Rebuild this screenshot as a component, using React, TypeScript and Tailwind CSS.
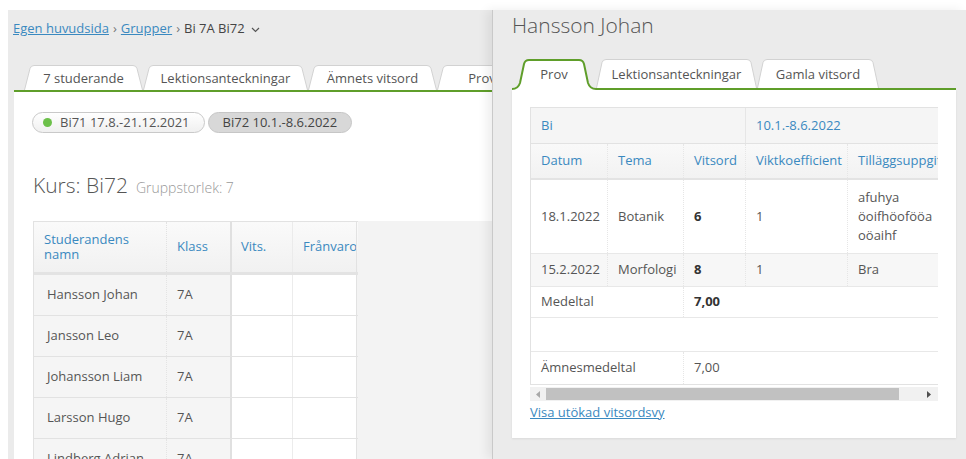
import React from "react";

type TabDef = { label: string; w: number };

const groupTabs: TabDef[] = [
  { label: "7 studerande", w: 119 },
  { label: "Lektionsanteckningar", w: 165 },
  { label: "Ämnets vitsord", w: 129 },
  { label: "Prov", w: 90 },
];

const drawerTabs: TabDef[] = [
  { label: "Prov", w: 84 },
  { label: "Lektionsanteckningar", w: 161 },
  { label: "Gamla vitsord", w: 122 },
];

const students = [
  "Hansson Johan",
  "Jansson Leo",
  "Johansson Liam",
  "Larsson Hugo",
  "Lindberg Adrian",
];

// trapezoid outline of a tab, open at the bottom
function tabOutline(w: number, h: number, s: number) {
  return `M0.5,${h} L${s - 2},3.5 Q${s - 1},0.5 ${s + 2},0.5 L${w - s - 2},0.5 Q${w - s + 1},0.5 ${w - s + 2},3.5 L${w - 0.5},${h}`;
}

function Tab({ label, w, h }: { label: string; w: number; h: number }) {
  return (
    <div className="relative shrink-0">
      <svg width={w} height={h} className="block">
        <path d={tabOutline(w, h, 8)} fill="#fff" stroke="#d2d2d2" strokeWidth="1" />
      </svg>
      <span className="absolute inset-0 flex items-center justify-center whitespace-nowrap pt-[3px] text-[#555]">
        {label}
      </span>
    </div>
  );
}

function ActiveTab({ label, w }: { label: string; w: number }) {
  const line = `M0,30 Q6,30 8,24 L12,5 Q13,1 17,1 L${w - 17},1 Q${w - 13},1 ${w - 12},5 L${w - 8},24 Q${w - 6},30 ${w},30`;
  return (
    <div className="relative -mb-[2px] shrink-0">
      <svg width={w} height={31} className="block">
        <path d={`${line} L${w},31 L0,31 Z`} fill="#fff" />
        <path d={line} fill="none" stroke="#5f9e2a" strokeWidth="2" />
      </svg>
      <span className="absolute inset-0 flex items-center justify-center pb-[2px] pt-[3px] text-[#555]">
        {label}
      </span>
    </div>
  );
}

function Breadcrumb() {
  return (
    <nav className="-ml-px mt-[9px] flex h-[18px] items-center gap-[4px] leading-[18px]">
      <a className="text-[#3a89c0] underline">Egen huvudsida</a>
      <span className="text-[#777]">›</span>
      <a className="text-[#3a89c0] underline">Grupper</a>
      <span className="text-[#777]">›</span>
      <span className="text-[#444]">Bi 7A Bi72</span>
      <svg width="9" height="6" className="ml-[2px] mt-[3px]">
        <path d="M1,1 L4.5,4.5 L8,1" fill="none" stroke="#555" strokeWidth="1.2" />
      </svg>
    </nav>
  );
}

function StudentTable() {
  return (
    <div className="ml-px mt-[21px] h-[300px] bg-[#f3f3f3]">
      <div className="w-[325px] border-l border-t border-[#e2e2e2]">
        <div className="flex h-[53px] border-b-[3px] border-[#e3e3e3] bg-gradient-to-b from-[#fafafa] to-[#f1f1f1] text-[#3a89c0]">
          <div className="flex w-[133px] items-center border-r border-dotted border-[#e2e2e2] pl-[10px]">
            <span className="block leading-[15px]">
              Studerandens
              <br />
              namn
            </span>
          </div>
          <div className="flex w-[63px] items-center pl-[10px]">Klass</div>
          <div className="flex w-[63px] items-center border-l-2 border-r border-[#e0e0e0] border-r-[#ebebeb] pl-[9px]">
            Vits.
          </div>
          <div className="flex w-[64px] items-center overflow-hidden whitespace-nowrap border-r border-[#e2e2e2] pl-[10px]">
            Frånvaro
          </div>
        </div>
        {students.map((name) => (
          <div key={name} className="flex h-[41px] border-b border-[#e2e2e2]">
            <div className="flex w-[133px] items-center border-r border-dotted border-[#e4e4e4] bg-[#f5f5f5] pl-[13px]">
              {name}
            </div>
            <div className="flex w-[63px] items-center bg-[#f5f5f5] pl-[10px]">7A</div>
            <div className="w-[63px] border-l-2 border-r border-[#e0e0e0] border-r-[#ececec] bg-white" />
            <div className="w-[64px] border-r border-[#e2e2e2] bg-white" />
          </div>
        ))}
      </div>
    </div>
  );
}

function GroupPage() {
  return (
    <div className="w-[484px] shrink-0 overflow-hidden pl-[6px]">
      <div className="w-[620px]">
        <Breadcrumb />
        <div className="mt-[28px] flex items-end border-b-2 border-[#5f9e2a] pl-[10px]">
          {groupTabs.map((t) => (
            <Tab key={t.label} label={t.label} w={t.w} h={25} />
          ))}
        </div>
        <div className="h-[400px] bg-white pl-[18px] pt-[20px]">
          <div className="flex gap-[3px] text-[#555]">
            <span className="flex h-[21px] items-center gap-[8px] rounded-full border border-[#c9c9c9] bg-gradient-to-b from-white to-[#f0f0f0] pl-[10px] pr-[14px]">
              <span className="h-[9px] w-[9px] rounded-full bg-[#6cc04a]" />
              Bi71 17.8.-21.12.2021
            </span>
            <span className="flex h-[21px] items-center rounded-full border border-[#c6c6c6] bg-[#d8d8d8] px-[14px] text-[#444]">
              Bi72 10.1.-8.6.2022
            </span>
          </div>
          <h2 className="ml-px mt-[37px] flex h-[30px] items-baseline gap-[8px] leading-[30px]">
            <span className="text-[21px] font-light text-[#555]">Kurs: Bi72</span>
            <span className="text-[14px] font-light text-[#999]">Gruppstorlek: 7</span>
          </h2>
          <StudentTable />
        </div>
      </div>
    </div>
  );
}

function GradeTable() {
  const cell = "flex items-center border-r border-dotted border-[#e6e6e6] pl-[10px]";
  return (
    <div className="w-[408px] overflow-hidden">
      <div className="w-[460px] border-l border-t border-[#e2e2e2]">
        <div className="flex h-[36px] border-b border-[#e2e2e2] bg-[#f5f5f5] text-[#3a89c0]">
          <div className="flex w-[215px] items-center border-r border-[#e6e6e6] pl-[10px]">Bi</div>
          <div className="flex items-center pl-[10px]">10.1.-8.6.2022</div>
        </div>
        <div className="flex h-[36px] border-b-2 border-[#e3e3e3] bg-gradient-to-b from-[#f9f9f9] to-[#f2f2f2] text-[#3a89c0]">
          <div className={`${cell} w-[77px]`}>Datum</div>
          <div className={`${cell} w-[76px]`}>Tema</div>
          <div className={`${cell} w-[62px]`}>Vitsord</div>
          <div className={`${cell} w-[102px] pl-[8px]`}>Viktkoefficient</div>
          <div className="flex w-[140px] items-center whitespace-nowrap pl-[10px]">Tilläggsuppgifter</div>
        </div>
        <div className="flex h-[74px] border-b border-[#e8e8e8] bg-white">
          <div className={`${cell} w-[77px]`}>18.1.2022</div>
          <div className={`${cell} w-[76px]`}>Botanik</div>
          <div className={`${cell} w-[62px] font-bold text-[#333]`}>6</div>
          <div className={`${cell} w-[102px] pl-[8px]`}>1</div>
          <div className="flex w-[140px] items-center pl-[10px]">
            <span className="block leading-[19px]">
              afuhya
              <br />
              öoifhöofööa
              <br />
              oöaihf
            </span>
          </div>
        </div>
        <div className="flex h-[33px] border-b border-[#e8e8e8] bg-[#f7f7f7]">
          <div className={`${cell} w-[77px]`}>15.2.2022</div>
          <div className={`${cell} w-[76px]`}>Morfologi</div>
          <div className={`${cell} w-[62px] font-bold text-[#333]`}>8</div>
          <div className={`${cell} w-[102px] pl-[8px]`}>1</div>
          <div className="flex w-[140px] items-center pl-[10px]">Bra</div>
        </div>
        <div className="flex h-[31px] border-b border-[#e8e8e8] bg-white">
          <div className={`${cell} w-[153px]`}>Medeltal</div>
          <div className="flex items-center pl-[10px] font-bold text-[#333]">7,00</div>
        </div>
        <div className="h-[34px] border-b border-[#e8e8e8] bg-white" />
        <div className="flex h-[33px] border-b border-[#e2e2e2] bg-white">
          <div className={`${cell} w-[153px]`}>Ämnesmedeltal</div>
          <div className="flex items-center pl-[10px]">7,00</div>
        </div>
      </div>
    </div>
  );
}

function StudentDrawer() {
  return (
    <div className="relative flex-1 border-l border-[#c9c9c9] bg-[#ebebeb] pl-[19px] pr-[10px] shadow-[-5px_0_10px_rgba(0,0,0,0.07)]">
      <h1 className="text-[21px] font-light leading-[30px] text-[#555]">Hansson Johan</h1>
      <div className="mt-[19px] flex items-end border-b-2 border-[#5f9e2a]">
        <ActiveTab label={drawerTabs[0].label} w={drawerTabs[0].w} />
        {drawerTabs.slice(1).map((t) => (
          <Tab key={t.label} label={t.label} w={t.w} h={29} />
        ))}
      </div>
      <div className="h-[348px] bg-white px-[18px] pt-[17px] shadow-[0_1px_2px_rgba(0,0,0,0.08)]">
        <GradeTable />
        <div className="mt-[2px] flex h-[14px] w-[408px] items-center bg-[#f1f1f1]">
          <svg width="5" height="7" className="ml-[6px]">
            <path d="M4,0 L0,3.5 L4,7 Z" fill="#a8a8a8" />
          </svg>
          <div className="ml-[5px] h-[12px] w-[353px] bg-[#c1c1c1]" />
          <svg width="5" height="7" className="ml-auto mr-[6px]">
            <path d="M0,0 L4,3.5 L0,7 Z" fill="#505050" />
          </svg>
        </div>
        <a className="mt-[2px] block leading-[18px] text-[#3a89c0] underline">Visa utökad vitsordsvy</a>
      </div>
    </div>
  );
}

export default function App() {
  return (
    <div className="h-[459px] w-[966px] overflow-hidden bg-white pl-[8px] pt-[10px] font-['Open_Sans',sans-serif] text-[13px] text-[#555]">
      <div className="flex h-[449px] bg-[#ebebeb]">
        <GroupPage />
        <StudentDrawer />
      </div>
    </div>
  );
}
